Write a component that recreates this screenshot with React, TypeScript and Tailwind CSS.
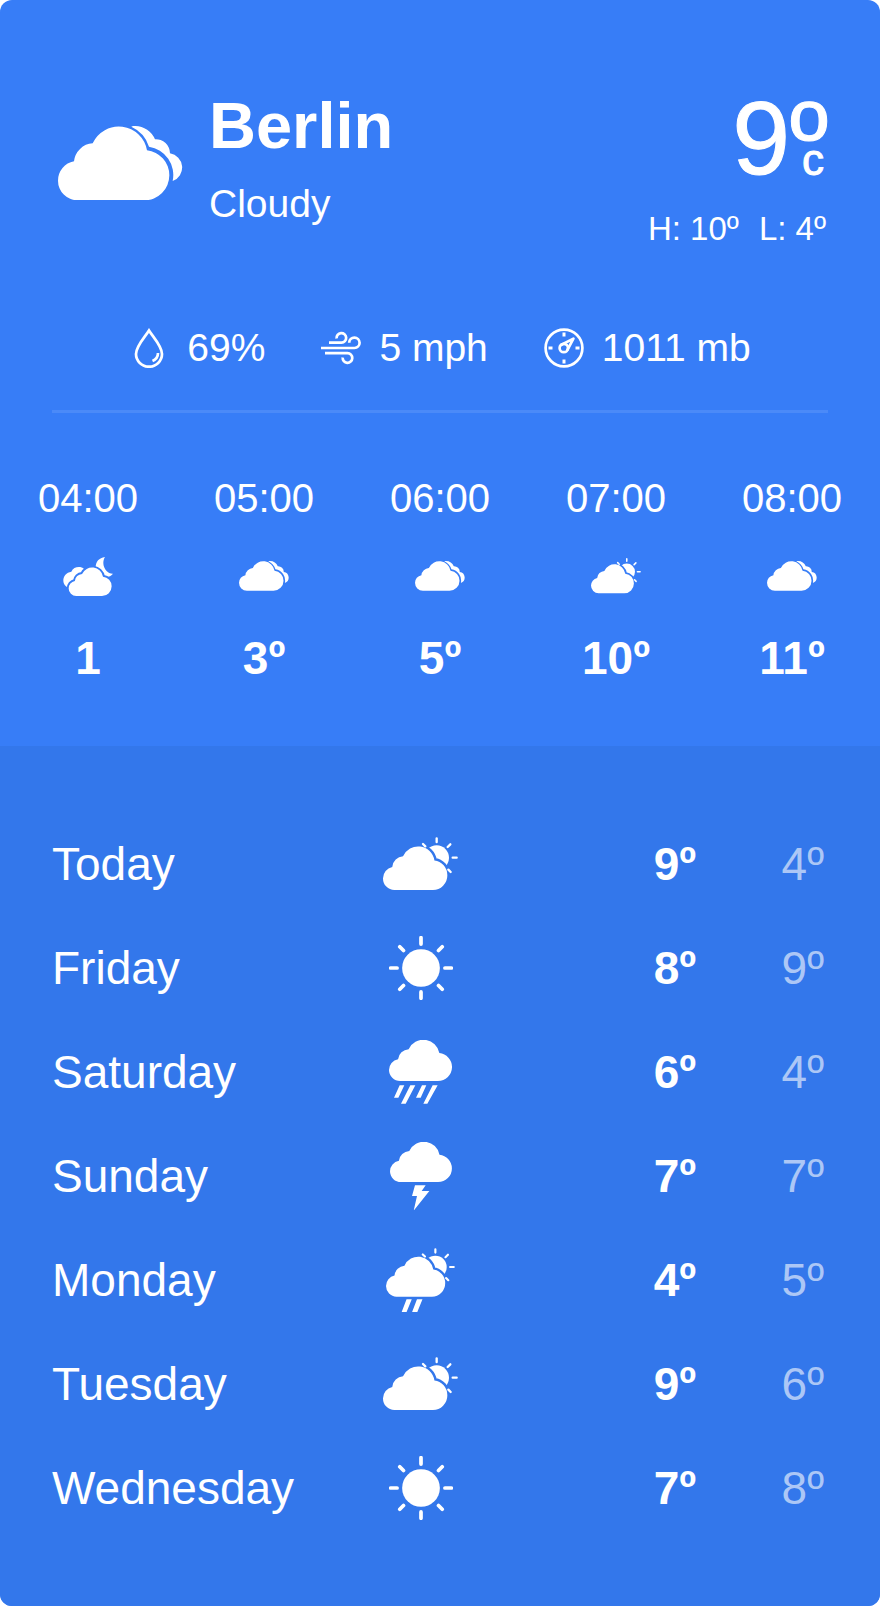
import React, { useId } from 'react';

type Condition = 'cloudy' | 'night' | 'partly' | 'sunny' | 'rain' | 'thunder' | 'showers';

type Hour = { time: string; condition: Condition; temp: string };
type Day = { name: string; condition: Condition; high: number; low: number };

const hours: Hour[] = [
  { time: '04:00', condition: 'night', temp: '1' },
  { time: '05:00', condition: 'cloudy', temp: '3º' },
  { time: '06:00', condition: 'cloudy', temp: '5º' },
  { time: '07:00', condition: 'partly', temp: '10º' },
  { time: '08:00', condition: 'cloudy', temp: '11º' }
];

const days: Day[] = [
  { name: 'Today', condition: 'partly', high: 9, low: 4 },
  { name: 'Friday', condition: 'sunny', high: 8, low: 9 },
  { name: 'Saturday', condition: 'rain', high: 6, low: 4 },
  { name: 'Sunday', condition: 'thunder', high: 7, low: 7 },
  { name: 'Monday', condition: 'showers', high: 4, low: 5 },
  { name: 'Tuesday', condition: 'partly', high: 9, low: 6 },
  { name: 'Wednesday', condition: 'sunny', high: 7, low: 8 }
];

// shared cloud outline, 334 x 220
const CLOUD =
  'M59 220A59 59 0 0 1 0 161A59 59 0 0 1 48 103A60 60 0 0 1 104 49A86 86 0 0 1 267 70A75 75 0 0 1 334 145A75 75 0 0 1 259 220Z';

function SunBehindCloud() {
  const id = useId();
  return (
    <>
      <mask id={id} maskUnits="userSpaceOnUse" x="0" y="0" width="225" height="160">
        <rect width="225" height="160" fill="white" />
        <path d={CLOUD} transform="translate(0 29) scale(.578 .591)" fill="black" stroke="black" strokeWidth="26" />
      </mask>
      <circle cx="161" cy="62" r="37" mask={`url(#${id})`} />
      <path
        d="M161 4v11M194 30l8 -8M209 62h12M196 98l7 7M120 21l7 7"
        stroke="currentColor"
        strokeWidth="7"
        strokeLinecap="round"
      />
      <path d={CLOUD} transform="translate(0 29) scale(.578 .591)" />
    </>
  );
}

function Cloudy({ className }: { className: string }) {
  return (
    <svg className={className} viewBox="0 0 375 223" fill="currentColor" aria-hidden="true">
      <path d={CLOUD} transform="translate(0 3)" />
      <path d="M220 2C224 0 228 0 232 0A65 65 0 0 1 291 40A42 42 0 0 1 336 82A43 43 0 0 1 344 165A86 86 0 0 0 273 62A98 98 0 0 0 220 2Z" />
    </svg>
  );
}

function Night() {
  const id = useId();
  return (
    <svg className="w-[50px]" viewBox="0 0 150 117" fill="currentColor" aria-hidden="true">
      <mask id={id} maskUnits="userSpaceOnUse" x="0" y="0" width="150" height="117">
        <rect width="150" height="117" fill="white" />
        <path d={CLOUD} transform="translate(17 32) scale(.386)" fill="black" stroke="black" strokeWidth="30" />
      </mask>
      <g mask={`url(#${id})`}>
        <path d="M63 36C54 27 32 28 25 44C10 46 1 58 1 70C1 82 8 89 15 91L63 60Z" />
        <path d="M126 0C108 2 98 15 98 30C98 50 112 60 128 60C138 60 146 56 150 50C130 52 112 22 126 0Z" />
      </g>
      <path d={CLOUD} transform="translate(17 32) scale(.386)" />
    </svg>
  );
}

function WeatherIcon({ condition, small }: { condition: Condition; small?: boolean }) {
  switch (condition) {
    case 'night':
      return <Night />;
    case 'cloudy':
      return <Cloudy className="w-[50px]" />;
    case 'partly':
      return (
        <svg className={small ? 'w-[50px]' : 'w-[75px]'} viewBox="0 0 225 160" fill="currentColor" aria-hidden="true">
          <SunBehindCloud />
        </svg>
      );
    case 'showers':
      return (
        <svg className="w-[69px]" viewBox="0 0 225 209" fill="currentColor" aria-hidden="true">
          <SunBehindCloud />
          <path d="M67 167h17L67 209H51ZM101 167h18L102 209H85Z" />
        </svg>
      );
    case 'sunny':
      return (
        <svg className="w-[64px]" viewBox="0 0 190 190" fill="currentColor" aria-hidden="true">
          <circle cx="95" cy="95" r="56" />
          <path
            d="M95 5V24M95 166V185M5 95H24M166 95H185M32 32L43 43M147 147L158 158M158 32L147 43M43 147L32 158"
            stroke="currentColor"
            strokeWidth="11"
            strokeLinecap="round"
          />
        </svg>
      );
    case 'rain':
      return (
        <svg className="w-[63px]" viewBox="0 0 189 191" fill="currentColor" aria-hidden="true">
          <path d={CLOUD} transform="scale(.566 .56)" />
          <path d="M32 136h14L28 173H15ZM64 136h15L50 191H36ZM99 136h13L95 173H81ZM131 136h15L115 191H103Z" />
        </svg>
      );
    case 'thunder':
      return (
        <svg className="w-[62px]" viewBox="0 0 186 206" fill="currentColor" aria-hidden="true">
          <path d={CLOUD} transform="scale(.556 .546)" />
          <path d="M75 130H107L95 147H118L71 206L81 162H66Z" />
        </svg>
      );
  }
}

function Stat({ icon, label, value }: { icon: React.ReactNode; label: string; value: string }) {
  return (
    <li className="flex items-center gap-[18px]" aria-label={label}>
      <svg
        className="size-10"
        viewBox="0 0 40 40"
        fill="none"
        stroke="currentColor"
        strokeWidth="2.7"
        aria-hidden="true"
      >
        {icon}
      </svg>
      <span>{value}</span>
    </li>
  );
}

function CurrentWeather() {
  return (
    <div className="flex justify-between">
      <div className="flex items-center self-start gap-[26px] pl-1.5">
        <Cloudy className="w-[125px] mt-2.5" />
        <div>
          <h1 className="text-[65px] leading-[76px] font-bold">Berlin</h1>
          <p className="text-[39px] leading-12 mt-4">Cloudy</p>
        </div>
      </div>
      <div className="text-right">
        <p className="relative text-[104px] leading-[100px] [-webkit-text-stroke:1px_white]">
          9º
          <span className="absolute right-1 bottom-2 text-[44px] leading-10">c</span>
        </p>
        <p className="flex justify-end gap-5 pr-0.5 text-[33px] leading-10 mt-[21px]">
          <span>H: 10º</span>
          <span>L: 4º</span>
        </p>
      </div>
    </div>
  );
}

function Stats() {
  return (
    <ul className="flex justify-center gap-14 mt-[75px] text-[39px] leading-12">
      <Stat
        label="Humidity"
        value="69%"
        icon={
          <>
            <path d="M20 2.5C16 9 7 18 7 26A13 12.7 0 0 0 33 26C33 18 24 9 20 2.5Z" />
            <path d="M29 25C29 29 27 31.5 23.5 33" />
          </>
        }
      />
      <Stat
        label="Wind"
        value="5 mph"
        icon={
          <>
            <path d="M8 14.7H20.5A4.8 4.8 0 1 0 15.6 10.5" />
            <path d="M0 20H33.5A5.2 5.2 0 1 0 28.2 14.7" />
            <path d="M4 25.2H26.5A4.8 4.8 0 1 1 21.7 29.5" />
          </>
        }
      />
      <Stat
        label="Pressure"
        value="1011 mb"
        icon={
          <>
            <circle cx="20" cy="20" r="18.4" />
            <path d="M20 4.5V8.5M20 31.5V35.5M4.5 20H8.5M31.5 20H35.5" strokeWidth="3" />
            <path d="M16.5 17.2L29.4 10.6L23.2 22.4" strokeLinejoin="round" />
            <circle cx="19.8" cy="20" r="4.2" />
          </>
        }
      />
    </ul>
  );
}

function Hourly() {
  return (
    <ul className="grid grid-cols-5 pt-[61px] pb-15">
      {hours.map((hour) => (
        <li key={hour.time} className="flex flex-col items-center">
          <span className="text-[40px] leading-12">{hour.time}</span>
          <span className="flex items-center h-10 my-[34px]">
            <WeatherIcon condition={hour.condition} small />
          </span>
          <span className="text-[46px] leading-14 font-bold">{hour.temp}</span>
        </li>
      ))}
    </ul>
  );
}

function Daily() {
  return (
    <section className="bg-[#3377eb] px-13 py-[66px]">
      <table className="w-full table-fixed text-[46px] leading-13">
        <tbody>
          {days.map((day) => (
            <tr key={day.name} className="h-26">
              <th scope="row" className="w-[36%] text-left font-normal">
                {day.name}
              </th>
              <td className="w-[23%]">
                <span className="flex justify-center">
                  <WeatherIcon condition={day.condition} />
                </span>
              </td>
              <td className="w-[24%] text-right font-bold">{day.high}º</td>
              <td className="w-[17%] pr-1 text-right text-white/60">{day.low}º</td>
            </tr>
          ))}
        </tbody>
      </table>
    </section>
  );
}

function App() {
  return (
    <main className="overflow-hidden rounded-xl bg-[#377df7] text-white font-['Liberation_Sans',Arial,sans-serif]">
      <section className="px-13 pt-22">
        <CurrentWeather />
        <Stats />
        <hr className="mt-[38px] border-0 h-[3px] bg-white/10" />
      </section>
      <Hourly />
      <Daily />
    </main>
  );
}

export default App;
